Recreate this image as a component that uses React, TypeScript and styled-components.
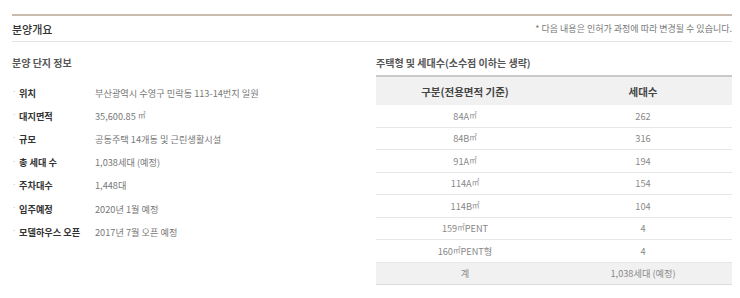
import React from "react";
import styled, { createGlobalStyle } from "styled-components";

const GlobalStyle = createGlobalStyle`
    body {
        margin: 0;
        background: #ffffff;
        font-family: "Noto Sans CJK KR", "Noto Sans", sans-serif;
    }
`;

const Page = styled.div`
    width: 720px;
    padding: 14px 8px 0 12px;
`;

const Header = styled.div`
    display: flex;
    justify-content: space-between;
    align-items: center;
    height: 25px;
    border-top: 2px solid #c9bcae;
    border-bottom: 1px solid #e4e4e4;
`;

const Title = styled.h2`
    margin: 0;
    font-size: 11px;
    font-weight: 500;
    color: #333;
`;

const Note = styled.p`
    margin: 0;
    font-size: 9px;
    color: #777;
`;

const Body = styled.div`
    display: grid;
    grid-template-columns: 364px 356px;
    padding-top: 14px;
`;

const SectionTitle = styled.h3`
    margin: 0;
    font-size: 10px;
    line-height: 14px;
    font-weight: 700;
    color: #555;
`;

const InfoList = styled.ul`
    list-style: none;
    margin: 11px 0 0;
    padding: 0;
`;

const InfoRow = styled.li`
    display: flex;
    align-items: center;
    height: 23.2px;
    font-size: 9.2px;
`;

const Bullet = styled.span`
    width: 7px;
    color: #c4c4c4;
    font-size: 8px;
    position: relative;
    top: -2px;
`;

const Label = styled.span`
    width: 76px;
    font-weight: 700;
    color: #333;
`;

const Value = styled.span`
    color: #777;
`;

const Unit = styled.span`
    display: inline-block;
    font-size: 7.5px;
    position: relative;
    top: -2px;
`;

const Table = styled.table`
    width: 100%;
    margin-top: 5px;
    border-collapse: collapse;
    border-top: 2px solid #c9c9c9;
    font-size: 9.2px;
`;

const Th = styled.th`
    width: 50%;
    height: 28px;
    padding: 0;
    background: #f1f1f1;
    font-size: 10.5px;
    font-weight: 700;
    color: #444;
`;

const Tr = styled.tr<{ $total?: boolean }>`
    background: ${(p) => (p.$total ? "#f1f1f1" : "transparent")};
    border-bottom: 1px solid ${(p) => (p.$total ? "#dcdcdc" : "#e6e6e6")};
`;

const Td = styled.td`
    height: 21.5px;
    padding: 0;
    text-align: center;
    color: #888;
`;

const info: [string, React.ReactNode][] = [
    ["위치", "부산광역시 수영구 민락동 113-14번지 일원"],
    ["대지면적", <>35,600.85 <Unit>㎡</Unit></>],
    ["규모", "공동주택 14개동 및 근린생활시설"],
    ["총 세대 수", "1,038세대 (예정)"],
    ["주차대수", "1,448대"],
    ["입주예정", "2020년 1월 예정"],
    ["모델하우스 오픈", "2017년 7월 오픈 예정"],
];

const units: [string, string, string][] = [
    ["84A", "", "262"],
    ["84B", "", "316"],
    ["91A", "", "194"],
    ["114A", "", "154"],
    ["114B", "", "104"],
    ["159", "PENT", "4"],
    ["160", "PENT형", "4"],
];

function App() {
    return (
        <Page>
            <GlobalStyle />
            <Header>
                <Title>분양개요</Title>
                <Note>* 다음 내용은 인허가 과정에 따라 변경될 수 있습니다.</Note>
            </Header>
            <Body>
                <div>
                    <SectionTitle>분양 단지 정보</SectionTitle>
                    <InfoList>
                        {info.map(([k, v]) => (
                            <InfoRow key={k}>
                                <Bullet>·</Bullet>
                                <Label>{k}</Label>
                                <Value>{v}</Value>
                            </InfoRow>
                        ))}
                    </InfoList>
                </div>
                <div>
                    <SectionTitle>주택형 및 세대수(소수점 이하는 생략)</SectionTitle>
                    <Table>
                        <thead>
                            <tr>
                                <Th>구분(전용면적 기준)</Th>
                                <Th>세대수</Th>
                            </tr>
                        </thead>
                        <tbody>
                            {units.map(([t, s, n]) => (
                                <Tr key={t}>
                                    <Td>
                                        {t}
                                        <Unit>㎡</Unit>
                                        {s}
                                    </Td>
                                    <Td>{n}</Td>
                                </Tr>
                            ))}
                            <Tr $total>
                                <Td>계</Td>
                                <Td>1,038세대 (예정)</Td>
                            </Tr>
                        </tbody>
                    </Table>
                </div>
            </Body>
        </Page>
    );
}

export default App;
